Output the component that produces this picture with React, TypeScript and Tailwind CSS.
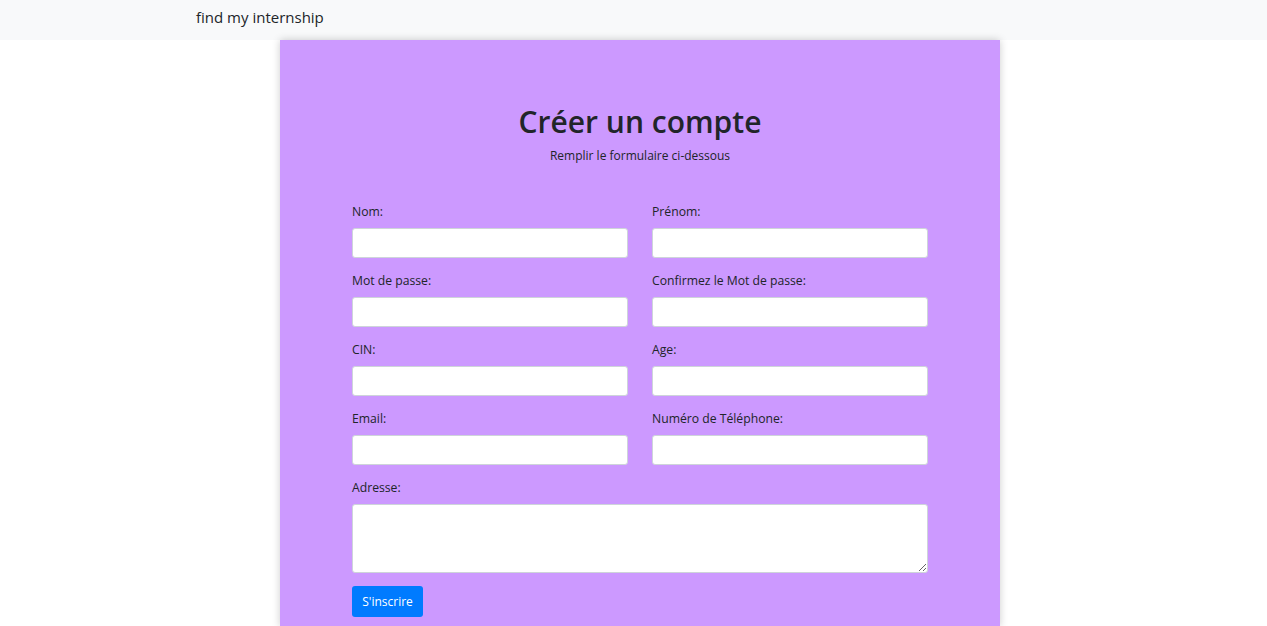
const fields: [string, string][] = [
  ["Nom:", "Prénom:"],
  ["Mot de passe:", "Confirmez le Mot de passe:"],
  ["CIN:", "Age:"],
  ["Email:", "Numéro de Téléphone:"],
];

function Field({ label }: { label: string }) {
  return (
    <div className="flex flex-col">
      <label className="text-[12.2px] leading-[16px] text-[#212529] mb-[8px]">{label}</label>
      <input className="h-[30px] w-full rounded-[3px] border border-[#ced4da] bg-white" />
    </div>
  );
}

export default function App() {
  return (
    <div className="min-h-screen bg-white font-['Open_Sans',sans-serif]">
      <nav className="h-[40px] bg-[#f8f9fa] flex items-center pl-[196px] pb-[6px]">
        <span className="text-[15px] text-[#212529]">find my internship</span>
      </nav>
      <div className="flex justify-center pl-[13px]">
        <div className="w-[720px] bg-[#cc99ff] shadow-[0_0_8px_rgba(0,0,0,0.2)] px-[72px] pt-[62px] pb-[10px]">
          <h1 className="text-center text-[30px] leading-[40px] font-semibold text-[#212529]">
            Créer un compte
          </h1>
          <p className="text-center text-[12px] leading-[16px] text-[#212529] mt-[6px]">
            Remplir le formulaire ci-dessous
          </p>
          <form className="mt-[40px] flex flex-col gap-[15px]">
            {fields.map(([a, b]) => (
              <div key={a} className="grid grid-cols-2 gap-[24px]">
                <Field label={a} />
                <Field label={b} />
              </div>
            ))}
            <div className="flex flex-col">
              <label className="text-[12.2px] leading-[16px] text-[#212529] mb-[8px]">Adresse:</label>
              <textarea className="h-[69px] w-full rounded-[3px] border border-[#ced4da] bg-white" />
            </div>
          </form>
          <button className="mt-[13px] h-[31px] w-[71px] rounded-[3px] bg-[#007bff] text-white text-[12px]">
            S'inscrire
          </button>
        </div>
      </div>
    </div>
  );
}
